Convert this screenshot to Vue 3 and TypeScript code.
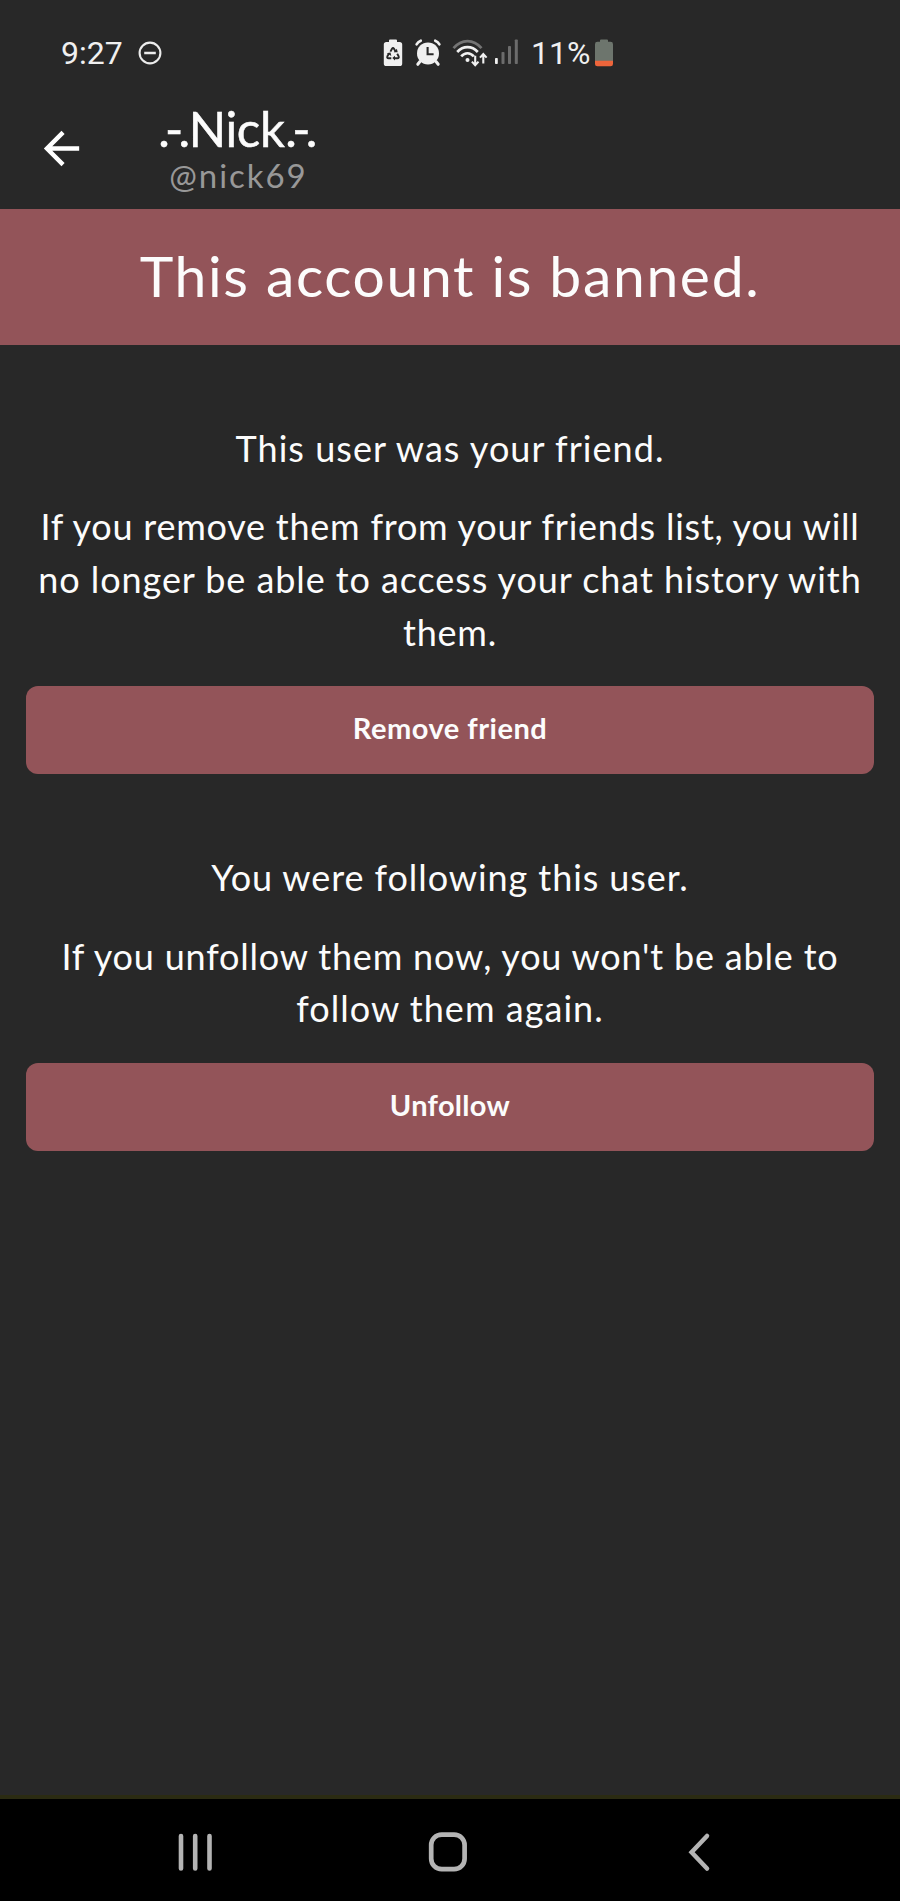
<script setup lang="ts">
interface Line {
  text: string
  fit: string
}

interface Section {
  heading: Line
  body: Line[]
  action: Line
}

const banner = 'This account is banned.'

const sections: Section[] = [
  {
    heading: { text: 'This user was your friend.', fit: 'ls-103' },
    body: [
      { text: 'If you remove them from your friends list, you will', fit: 'ls-76' },
      { text: 'no longer be able to access your chat history with', fit: 'ls-92' },
      { text: 'them.', fit: 'ls-76' },
    ],
    action: { text: 'Remove friend', fit: 'ls-50' },
  },
  {
    heading: { text: 'You were following this user.', fit: 'ls-92' },
    body: [
      { text: "If you unfollow them now, you won't be able to", fit: 'ls-81' },
      { text: 'follow them again.', fit: 'ls-103' },
    ],
    action: { text: 'Unfollow', fit: 'ls-30' },
  },
]
</script>

<template>
  <div class="screen">
    <div class="status">
      <span class="clock">9:27</span>
      <svg class="dnd" width="24" height="24" viewBox="0 0 24 24" fill="none" stroke="#ececec" stroke-width="2.1">
        <circle cx="12" cy="12" r="10.4" />
        <path d="M6.2 12h11.6" stroke-width="2.5" />
      </svg>

      <svg class="saver" width="20" height="28" viewBox="0 0 20 28">
        <path d="M6 3V1.6Q6 .6 7 .6h6q1 0 1 1V3h2.6Q19.2 3 19.2 5.6v18.8q0 2.6-2.6 2.6H3.4Q.8 27 .8 24.4V5.6Q.8 3 3.400 3z" fill="#f0f0f0" />
        <g fill="none" stroke="#282828" stroke-width="1.9" stroke-linejoin="round">
          <path d="M7.4 12.6 9 9.8q1-1.5 2 0l1.7 2.9" />
          <path d="M14.2 14.8l1.4 2.5q.8 1.9-1.3 1.9h-3" />
          <path d="M8.3 19.2H5.6q-2-.1-1.2-1.9l1.7-3" />
        </g>
        <path d="M10.8 13.2h3.9l-.8-3.5zM12 16.8v4.6l-2.7-2.3zM3.8 14.2l3.7-.8.8 3.6z" fill="#282828" />
      </svg>

      <svg class="alarm" width="28" height="28" viewBox="0 0 28 28">
        <g stroke="#f0f0f0" stroke-linecap="round" fill="none">
          <path d="M2.6 5.3Q3.9 2.8 6.8 1.7M21.2 1.7q2.9 1.1 4.2 3.6" stroke-width="2.6" />
          <path d="M6 22.5l-2.2 2.8M22 22.5l2.2 2.8" stroke-width="3" />
        </g>
        <circle cx="14" cy="14.4" r="11" fill="#f0f0f0" />
        <path d="M13.6 8v7.3h6" fill="none" stroke="#282828" stroke-width="2.1" />
      </svg>

      <svg class="wifi" width="36" height="28" viewBox="0 0 36 28" fill="none">
        <path d="M1.5 9.2C9.5-.3 21.5-.3 29.5 9.2" stroke="#747474" stroke-width="2.7" />
        <g stroke="#f0f0f0" stroke-width="2.7">
          <path d="M5.2 13c6-6.500 14.600-6.500 20.600 0" />
          <path d="M9.200 17.300c3.700-4.100 8.900-4.100 12.600 0" />
        </g>
        <circle cx="15.5" cy="21" r="2" fill="#f0f0f0" />
        <path d="M23.200 16.800v9M19.900 22.600l3.300 3.500 3.300-3.500M31.300 24.500v-9M28 18.600l3.300-3.500 3.300 3.500" stroke="#f0f0f0" stroke-width="2.1" />
      </svg>

      <svg class="signal" width="25" height="27" viewBox="0 0 25 27">
        <rect x="1" y="19" width="2.8" height="6" rx=".8" fill="#f0f0f0" />
        <g fill="#6c6c6c">
          <rect x="7.5" y="13" width="3" height="12" rx=".8" />
          <rect x="14" y="7" width="3" height="18" rx=".8" />
          <rect x="20.8" y="0.5" width="3" height="24.5" rx=".8" />
        </g>
      </svg>

      <span class="percent">11%</span>

      <svg class="battery" width="20" height="28" viewBox="0 0 20 28">
        <path d="M6 2.8V1.5Q6 .5 7 .5h6q1 0 1 1v1.300h2.600q2.400 0 2.400 2.400V22H1V5.200q0-2.400 2.400-2.400z" fill="#6d756d" />
        <path d="M1 21.800h18v3.100q0 2.400-2.400 2.400H3.400Q1 27.300 1 24.900z" fill="#ee653b" />
      </svg>
    </div>

    <header class="bar">
      <svg class="back" width="53" height="53" viewBox="0 0 24 24" fill="#fff">
        <path d="M20 11H7.830l5.590-5.590L12 4l-8 8 8 8 1.410-1.410L7.830 13H20z" />
      </svg>
      <div class="who">
        <div class="name"><span class="tick">.-.</span><span class="nick">Nick</span><span class="tick">.-.</span></div>
        <div class="handle">@nick69</div>
      </div>
    </header>

    <div class="banner">{{ banner }}</div>

    <main class="content">
      <section v-for="s in sections" :key="s.heading.text" class="section">
        <p class="heading" :class="s.heading.fit">{{ s.heading.text }}</p>
        <p class="body">
          <span v-for="l in s.body" :key="l.text" class="line" :class="l.fit">{{ l.text }}</span>
        </p>
        <button type="button" class="action" :class="s.action.fit">{{ s.action.text }}</button>
      </section>
    </main>

    <nav class="nav">
      <svg width="36" height="40" viewBox="0 0 36 40" stroke="#b4b4b4" stroke-width="4.6" stroke-linecap="round">
        <path d="M4 4v32.500M18.200 4v32.500M32.500 4v32.500" />
      </svg>
      <svg class="home" width="40" height="40" viewBox="0 0 40 40" fill="none" stroke="#b4b4b4" stroke-width="4.7">
        <rect x="3.2" y="2.6" width="33.4" height="34.6" rx="10.5" />
      </svg>
      <svg width="24" height="40" viewBox="0 0 24 40" fill="none" stroke="#b4b4b4" stroke-width="4.5" stroke-linecap="round">
        <path d="M20 4 4.600 20.200 20 36.500" />
      </svg>
    </nav>
  </div>
</template>

<style scoped>
.screen {
  display: flex;
  flex-direction: column;
  width: 900px;
  height: 1901px;
  background: #282828;
  color: #fcfcfc;
  font-family: Lato, "Open Sans", sans-serif;
}

.status {
  display: flex;
  align-items: center;
  box-sizing: border-box;
  height: 105px;
  padding-left: 61px;
  color: #f0f0f0;
  font: 32px/38px Roboto, sans-serif;
}
.clock { width: 77px; }
.dnd { margin-right: 221px; }
.saver { margin-right: 11px; }
.alarm { margin-right: 10px; }
.wifi { margin-right: 6px; }
.signal { margin-right: 12px; }
.percent { width: 63px; }

.bar {
  display: flex;
  box-sizing: border-box;
  height: 104px;
  padding-left: 35px;
}
.back { margin: 17px 69px 0 0; }
.who { width: 160px; text-align: center; white-space: nowrap; }
.name {
  display: flex;
  justify-content: center;
  height: 47px;
  line-height: 46px;
  font-size: 49px;
  -webkit-text-stroke: 0.5px currentColor;
}
.tick { letter-spacing: -4.7px; margin-right: 3.2px; }
.nick { letter-spacing: -0.3px; margin-right: 0.8px; }
.handle {
  height: 46px;
  padding-left: 3px;
  line-height: 46px;
  font-size: 33px;
  letter-spacing: 1.95px;
  color: #989898;
}

.banner {
  height: 136px;
  line-height: 133px;
  background: #935459;
  text-align: center;
  font-size: 57px;
  letter-spacing: 1.66px;
}

.content {
  flex: 1;
  padding: 0 26px;
}
.section {
  display: flex;
  flex-direction: column;
  padding-top: 77px;
}
.section + .section { padding-top: 77px; }
.heading,
.body {
  margin: 0;
  text-align: center;
  font-size: 36px;
  line-height: 52.7px;
  white-space: nowrap;
}
.body { margin-top: 25.600px; }
.line { display: block; }
.action {
  height: 88px;
  margin-top: 28px;
  padding: 0 0 4px;
  border: 0;
  border-radius: 12px;
  background: #935459;
  color: #fcfcfc;
  font: 700 29px/34px Lato, "Open Sans", sans-serif;
}

.ls-30 { letter-spacing: 0.3px; }
.ls-50 { letter-spacing: 0.5px; }
.ls-76 { letter-spacing: 0.76px; }
.ls-81 { letter-spacing: 0.81px; }
.ls-92 { letter-spacing: 0.92px; }
.ls-103 { letter-spacing: 1.03px; }

.nav {
  display: flex;
  justify-content: space-between;
  box-sizing: border-box;
  height: 106px;
  padding: 33px 189px 0 177px;
  border-top: 4px solid #2b2b12;
  background: #000;
}
.home { margin-right: 5px; }
</style>
